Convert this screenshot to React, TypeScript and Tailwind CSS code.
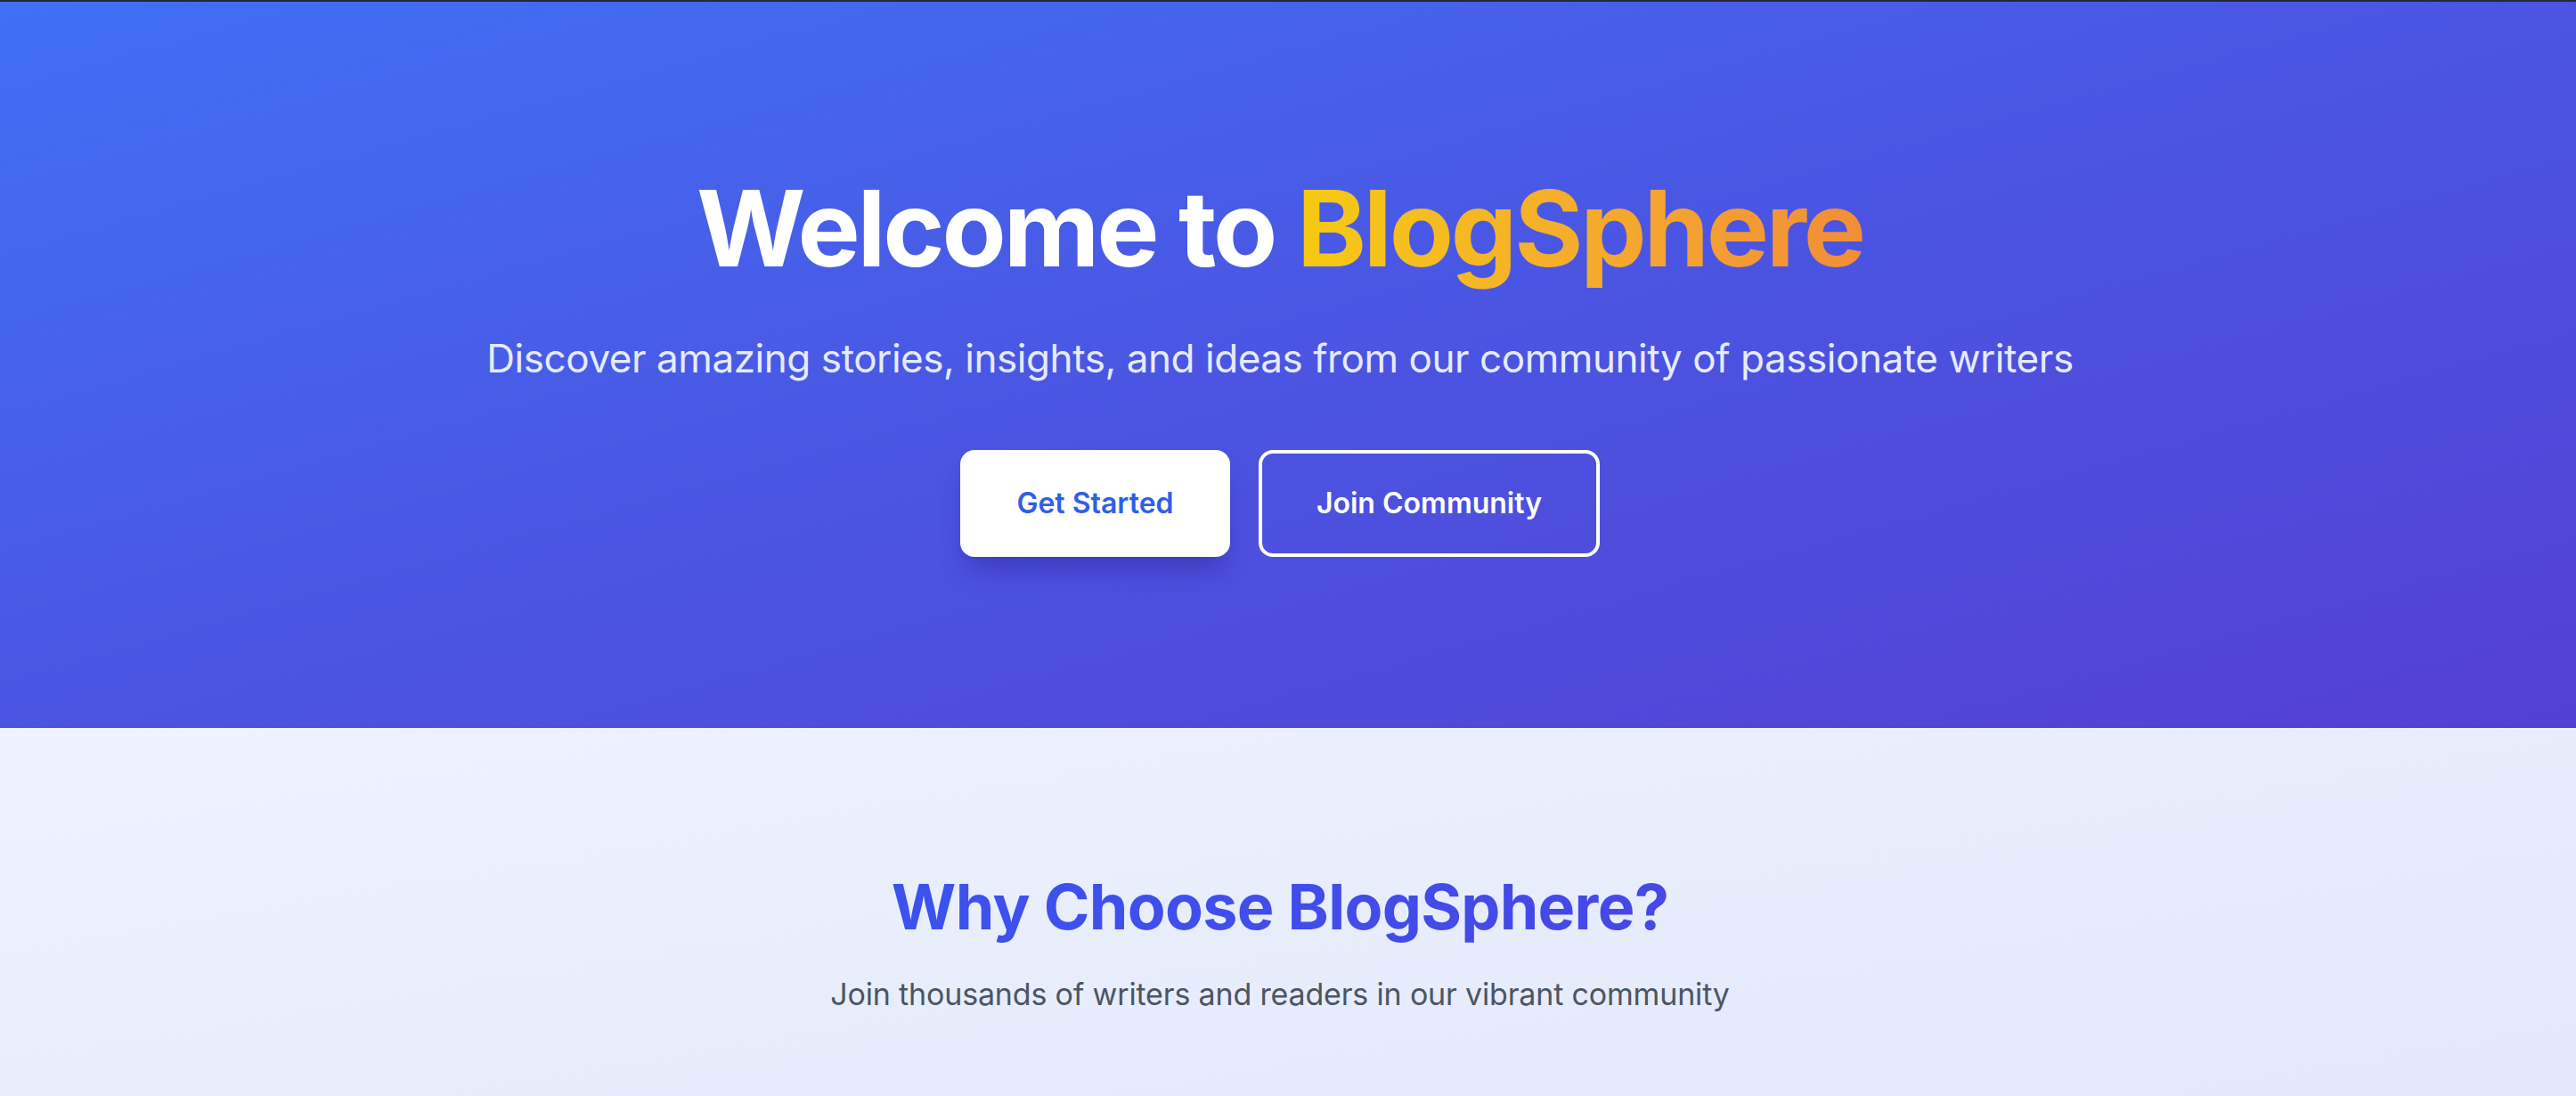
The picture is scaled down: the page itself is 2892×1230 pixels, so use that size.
import React from "react";

const font = { fontFamily: "Inter, 'Noto Sans', sans-serif" };

function Hero() {
  return (
    <section className="bg-gradient-to-br from-[#3f70f4] via-[#4a55e2] to-[#5340d2] pt-[194px] pb-[192px]">
      <div className="mr-[18px] text-center">
        <h1 className="text-[118px] leading-[120px] font-bold tracking-[-0.027em] text-white">
          Welcome to{" "}
          <span className="bg-gradient-to-r from-[#f5ca10] to-[#f28d38] bg-clip-text text-transparent">
            BlogSphere
          </span>
        </h1>
        <p className="mt-[56px] text-[44px] leading-[60px] tracking-[-0.01em] text-[#e6ebff]">
          Discover amazing stories, insights, and ideas from our community of passionate writers
        </p>
        <div className="mt-[73px] flex justify-center gap-[32px]">
          <button className="h-[120px] w-[303px] rounded-[16px] bg-white text-[32px] font-semibold text-[#2f5ee8] shadow-[0_20px_30px_-8px_rgba(40,30,140,0.45)]">
            Get Started
          </button>
          <button className="h-[120px] w-[383px] rounded-[16px] border-[4px] border-white text-[32px] font-semibold text-white">
            Join Community
          </button>
        </div>
      </div>
    </section>
  );
}

function Features() {
  return (
    <section className="bg-gradient-to-br from-[#eef3fe] to-[#e2e7fb] pt-[159px] pb-[160px]">
      <div className="mr-[18px] text-center">
        <h2 className="text-[70px] leading-[84px] font-bold tracking-[-0.01em]">
          <span className="bg-gradient-to-r from-[#3b52ef] to-[#4548e6] bg-clip-text text-transparent">
            Why Choose BlogSphere?
          </span>
        </h2>
        <p className="mt-[30px] text-[34px] leading-[52px] tracking-[-0.005em] text-[#4b5563]">
          Join thousands of writers and readers in our vibrant community
        </p>
      </div>
    </section>
  );
}

export default function App() {
  return (
    <main style={font} className="min-h-screen bg-[#e8edfc]">
      <div className="h-[2px] bg-[#272932]" />
      <Hero />
      <Features />
    </main>
  );
}
